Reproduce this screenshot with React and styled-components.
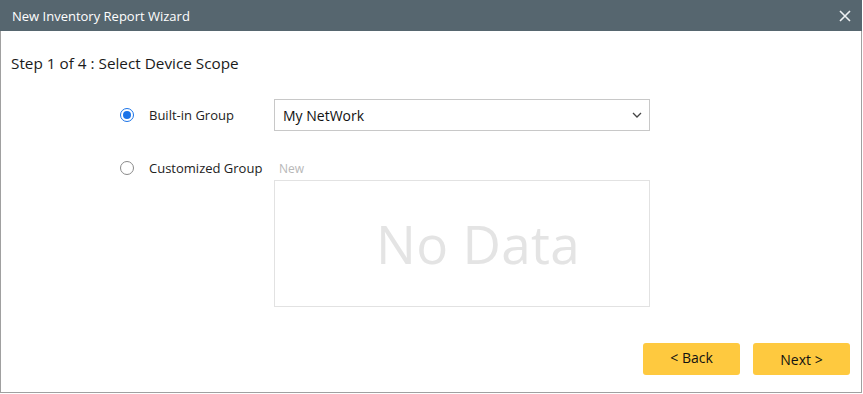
import React from "react";
import styled, { createGlobalStyle } from "styled-components";

const Global = createGlobalStyle`
  html, body { margin: 0; padding: 0; background: #fff; }
  body { font-family: "Open Sans", "Noto Sans", sans-serif; }
  * { box-sizing: border-box; }
`;

const Dialog = styled.div`
  width: 862px;
  height: 393px;
  border: 1px solid #a0a0a0;
  border-top: none;
  display: flex;
  flex-direction: column;
  background: #fff;
`;

const TitleBar = styled.div`
  height: 31px;
  margin: 0 -1px;
  background: #56666f;
  color: #fff;
  display: flex;
  align-items: center;
  justify-content: space-between;
  padding: 0 10px 0 12px;
  font-size: 13px;
`;

const CloseBtn = styled.div`
  width: 14px;
  height: 14px;
  display: flex;
  align-items: center;
  justify-content: center;
`;

const Body = styled.div`
  flex: 1;
  display: flex;
  flex-direction: column;
  padding: 21px 11px 0 10px;
`;

const StepTitle = styled.div`
  font-size: 15.3px;
  color: #1a1a1a;
  line-height: 22px;
`;

const Form = styled.div`
  display: grid;
  grid-template-columns: 153px 376px;
  margin-top: 25px;
  margin-left: 110px;
`;

const RadioLabel = styled.label`
  display: flex;
  align-items: center;
  gap: 15px;
  font-size: 13px;
  color: #222;
  height: ${(p) => p.h}px;
  align-self: start;
  margin-top: ${(p) => p.mt || 0}px;
  margin-left: -1px;
`;

const Radio = styled.span`
  width: 14px;
  height: 14px;
  border-radius: 50%;
  border: 1px solid ${(p) => (p.checked ? "#1a73e8" : "#8a8a8a")};
  display: flex;
  align-items: center;
  justify-content: center;
  flex-shrink: 0;
  &::after {
    content: "";
    display: ${(p) => (p.checked ? "block" : "none")};
    width: 8px;
    height: 8px;
    border-radius: 50%;
    background: #1a73e8;
  }
`;

const Select = styled.div`
  height: 32px;
  border: 1px solid #c8c8c8;
  display: flex;
  align-items: center;
  justify-content: space-between;
  padding: 0 7px 0 8px;
  font-size: 14px;
  color: #111;
`;

const GroupCol = styled.div`
  display: flex;
  flex-direction: column;
  margin-top: 26px;
`;

const NewLabel = styled.div`
  font-size: 12px;
  color: #b8b8b8;
  line-height: 23px;
  padding-left: 5px;
`;

const EmptyBox = styled.div`
  height: 127px;
  border: 1px solid #e2e2e2;
  display: flex;
  align-items: center;
  justify-content: center;
  padding: 0 0 0 32px;
  font-size: 53px;
  color: #e4e4e4;
  letter-spacing: 0.3px;
`;

const Footer = styled.div`
  margin-top: auto;
  display: flex;
  justify-content: flex-end;
  gap: 13px;
  padding-bottom: 17px;
`;

const Button = styled.button`
  width: 97px;
  height: 32px;
  border: none;
  border-radius: 3px;
  background: #fec93f;
  font-family: inherit;
  font-size: 14px;
  color: #111;
  padding: 0 0 ${(p) => p.pb || 0}px;
  cursor: pointer;
`;

export default function App() {
  return (
    <>
      <Global />
      <Dialog>
        <TitleBar>
          <span>New Inventory Report Wizard</span>
          <CloseBtn>
            <svg width="12" height="12" viewBox="0 0 12 12">
              <path d="M1 1L11 11M11 1L1 11" stroke="#eef1f3" strokeWidth="1.6" />
            </svg>
          </CloseBtn>
        </TitleBar>
        <Body>
          <StepTitle>Step 1 of 4 : Select Device Scope</StepTitle>
          <Form>
            <RadioLabel h={32}>
              <Radio checked />
              Built-in Group
            </RadioLabel>
            <Select>
              <span>My NetWork</span>
              <svg width="10" height="6" viewBox="0 0 10 6">
                <path d="M1 1L5 5L9 1" stroke="#444" strokeWidth="1.3" fill="none" />
              </svg>
            </Select>
            <RadioLabel h={22} mt={26}>
              <Radio />
              Customized Group
            </RadioLabel>
            <GroupCol>
              <NewLabel>New</NewLabel>
              <EmptyBox>No Data</EmptyBox>
            </GroupCol>
          </Form>
          <Footer>
            <Button pb={4}>&lt; Back</Button>
            <Button>Next &gt;</Button>
          </Footer>
        </Body>
      </Dialog>
    </>
  );
}
